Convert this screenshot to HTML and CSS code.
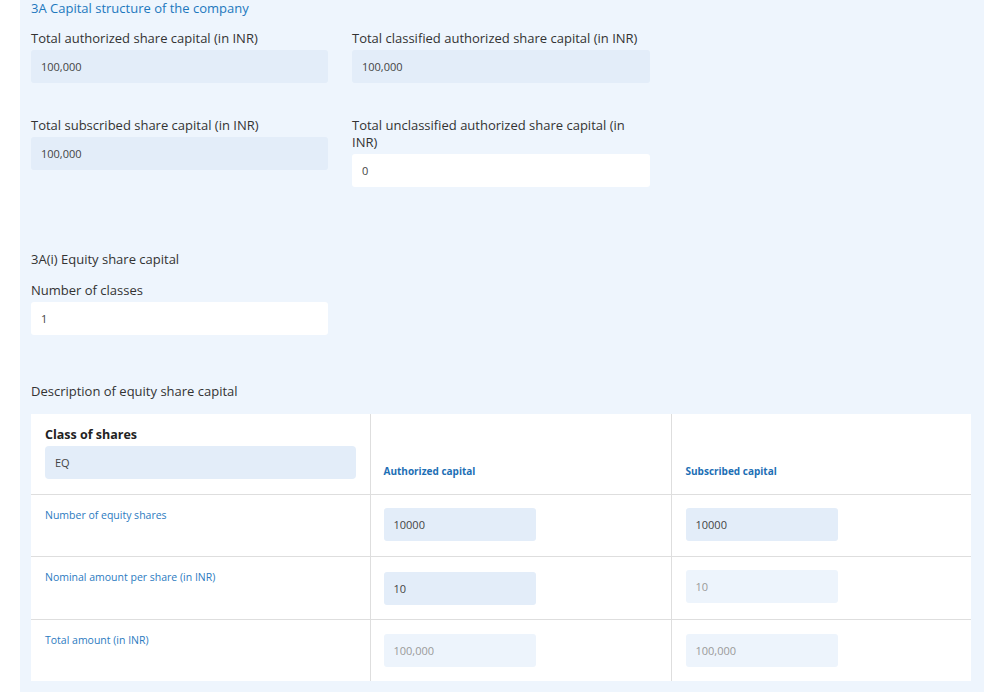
FILE: index.html
```html
<!DOCTYPE html>
<html>
<head>
<meta charset="utf-8">
<link rel="stylesheet" href="styles.css">
</head>
<body>
<div class="panel">
  <div class="title">3A Capital structure of the company</div>
  <div class="grid">
    <div class="field">
      <div class="label">Total authorized share capital (in INR)</div>
      <div class="input filled">100,000</div>
    </div>
    <div class="field">
      <div class="label">Total classified authorized share capital (in INR)</div>
      <div class="input filled">100,000</div>
    </div>
  </div>
  <div class="grid row2">
    <div class="field">
      <div class="label">Total subscribed share capital (in INR)</div>
      <div class="input filled">100,000</div>
    </div>
    <div class="field">
      <div class="label">Total unclassified authorized share capital (in INR)</div>
      <div class="input white">0</div>
    </div>
  </div>
  <div class="subhead">3A(i) Equity share capital</div>
  <div class="field single">
    <div class="label">Number of classes</div>
    <div class="input white">1</div>
  </div>
  <div class="desc">Description of equity share capital</div>
  <table class="tbl">
    <tr class="head">
      <td class="c1">
        <div class="cls">Class of shares</div>
        <div class="input filled eq">EQ</div>
      </td>
      <td class="c2 th">Authorized capital</td>
      <td class="c3 th">Subscribed capital</td>
    </tr>
    <tr class="r1">
      <td class="c1 rl">Number of equity shares</td>
      <td class="c2"><div class="input filled sm">10000</div></td>
      <td class="c3"><div class="input filled sm">10000</div></td>
    </tr>
    <tr class="r2">
      <td class="c1 rl">Nominal amount per share (in INR)</td>
      <td class="c2"><div class="input filled sm lower">10</div></td>
      <td class="c3"><div class="input dis sm">10</div></td>
    </tr>
    <tr class="r3">
      <td class="c1 rl">Total amount (in INR)</td>
      <td class="c2"><div class="input dis sm last">100,000</div></td>
      <td class="c3"><div class="input dis sm last">100,000</div></td>
    </tr>
  </table>
</div>
</body>
</html>
```
FILE: styles.css
```css
html, body {
  margin: 0;
  padding: 0;
  background: #ffffff;
}
body {
  font-family: "Open Sans", "Noto Sans", sans-serif;
  color: #333;
  width: 1000px;
  height: 692px;
  overflow: hidden;
}
.panel {
  margin-left: 20px;
  width: 964px;
  min-height: 692px;
  box-sizing: border-box;
  padding: 0 11px;
  background: #eef5fd;
}
.title {
  font-size: 13px;
  line-height: 16px;
  color: #1d78bd;
}
.grid {
  display: grid;
  grid-template-columns: 297px 298px;
  column-gap: 24px;
  margin-top: 14px;
}
.grid.row2 {
  margin-top: 34px;
}
.label {
  font-size: 13px;
  line-height: 17px;
  color: #333;
  margin-bottom: 3px;
}
.input {
  height: 33px;
  box-sizing: border-box;
  padding: 0 10px;
  display: flex;
  align-items: center;
  font-size: 11px;
  color: #444;
  border-radius: 3px;
}
.filled { background: #e3edf9; }
.white { background: #ffffff; }
.dis { background: #edf4fc; color: #9a9a9a; }
.subhead {
  margin-top: 64px;
  font-size: 13px;
  line-height: 17px;
  color: #333;
}
.single {
  margin-top: 14px;
  width: 297px;
}
.desc {
  margin-top: 48px;
  font-size: 13px;
  line-height: 17px;
  color: #333;
}
.tbl {
  margin-top: 14px;
  width: 940px;
  border-collapse: collapse;
  background: #fff;
  table-layout: fixed;
}
.tbl td {
  border: 1px solid #dedede;
  padding: 0;
  vertical-align: top;
  box-sizing: border-box;
}
.tbl tr:first-child td { border-top: none; }
.tbl tr:last-child td { border-bottom: none; }
.tbl td:first-child { border-left: none; }
.tbl td:last-child { border-right: none; }
.c1 { width: 339px; padding: 0 14px !important; }
.c2 { width: 301px; padding-left: 13px !important; }
.c3 { width: 300px; padding-left: 14px !important; }
.head td { height: 80px; }
.head .c1 { padding-top: 13px !important; }
.cls {
  font-size: 12.5px;
  font-weight: 700;
  line-height: 16px;
  color: #222;
  margin-bottom: 3px;
}
.eq { height: 33px; padding-left: 10px; border-radius: 4px; }
.th {
  vertical-align: bottom !important;
  padding-bottom: 16px !important;
  font-size: 10px;
  font-weight: 700;
  color: #1d6fb5;
}
.r1 td, .r3 td { height: 62px; }
.r2 td { height: 63px; }
.rl {
  font-size: 10.5px;
  color: #2c7bbf;
  padding-top: 14px !important;
  line-height: 13px;
}
.c2 .sm, .c3 .sm { margin-top: 13px; }
.sm { width: 152px; }
.c2 .sm.lower { margin-top: 15px; }
.c2 .sm.last, .c3 .sm.last { margin-top: 14px; }
```
